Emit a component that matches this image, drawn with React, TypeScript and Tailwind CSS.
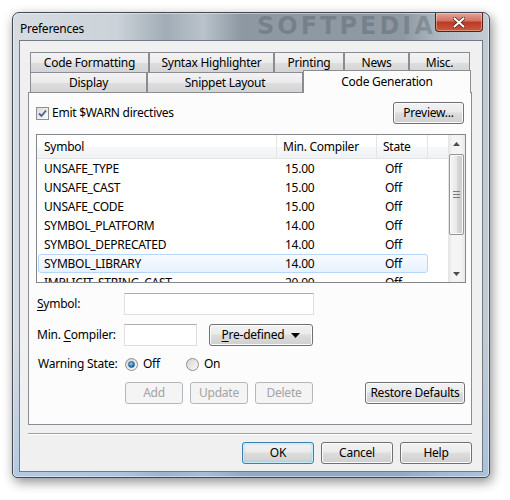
import clsx from 'clsx';
import type { ReactNode } from 'react';

const rows = [
  ['UNSAFE_TYPE', '15.00', 'Off'],
  ['UNSAFE_CAST', '15.00', 'Off'],
  ['UNSAFE_CODE', '15.00', 'Off'],
  ['SYMBOL_PLATFORM', '14.00', 'Off'],
  ['SYMBOL_DEPRECATED', '14.00', 'Off'],
  ['SYMBOL_LIBRARY', '14.00', 'Off'],
  ['IMPLICIT_STRING_CAST', '20.00', 'Off'],
];

function Button({
  children,
  className,
  disabled,
  primary,
}: {
  children: ReactNode;
  className?: string;
  disabled?: boolean;
  primary?: boolean;
}) {
  return (
    <div
      className={clsx(
        'flex h-[22px] items-center justify-center rounded-[3px] border text-[12px]',
        disabled
          ? 'border-[#b5b8bb] bg-[#f4f4f4] text-[#a3a3a3]'
          : primary
            ? 'border-[#3c7fb1] bg-[linear-gradient(#f2f2f2,#ebebeb_45%,#dddddd_50%,#cfcfcf)] text-black shadow-[inset_0_0_0_1px_#c4ecfb,inset_0_0_3px_#5ccbf5]'
            : 'border-[#707070] bg-[linear-gradient(#f2f2f2,#ebebeb_45%,#dddddd_50%,#cfcfcf)] text-black shadow-[inset_0_0_0_1px_#fbfbfb]',
        className,
      )}
    >
      {children}
    </div>
  );
}

function Tab({ label, className, selected }: { label: string; className: string; selected?: boolean }) {
  if (selected) {
    return (
      <div
        className={clsx(
          'relative z-10 -mb-px flex h-[23px] justify-center border border-b-0 border-[#898c95] bg-[#fcfcfc] pt-[2px] text-[12px]',
          className,
        )}
      >
        {label}
      </div>
    );
  }
  return (
    <div
      className={clsx(
        'flex h-[20px] items-center justify-center border border-b-0 border-[#898c95] bg-[linear-gradient(#f3f3f3,#ebebeb_50%,#dedede_50%,#d4d4d4)] text-[12px]',
        className,
      )}
    >
      {label}
    </div>
  );
}

function Radio({ checked, label, className }: { checked?: boolean; label: string; className?: string }) {
  return (
    <div className={clsx('flex items-center gap-[5px]', className)}>
      <span className="flex h-[13px] w-[13px] items-center justify-center rounded-full border border-[#8e8f8f] bg-[linear-gradient(135deg,#d4d4d4,#f9f9f9)]">
        {checked && (
          <span className="h-[7px] w-[7px] rounded-full border border-[#2c628b] bg-[radial-gradient(circle_at_40%_35%,#9fdcff,#2a78c5_55%,#0d3f7a)]" />
        )}
      </span>
      <span>{label}</span>
    </div>
  );
}

function Scrollbar() {
  return (
    <div className="flex w-[17px] flex-col bg-[linear-gradient(90deg,#e4e4e4,#f4f4f4_25%,#f4f4f4_75%,#e8e8e8)]">
      <div className="flex h-[17px] items-center justify-center">
        <svg width="7" height="4" viewBox="0 0 7 4">
          <path d="M3.5 0 L7 4 L0 4 Z" fill="#4d4d4d" />
        </svg>
      </div>
      <div className="flex-1 px-[1px] pt-[2px]">
        <div className="flex h-[81px] flex-col items-center justify-center gap-[2px] rounded-[2px] border border-[#959595] bg-[linear-gradient(90deg,#f6f6f6,#e9e9e9_50%,#d9d9d9_50%,#cdcdcd)] shadow-[inset_0_0_0_1px_#fafafa]">
          <span className="h-px w-[7px] bg-[#7b7b7b]" />
          <span className="h-px w-[7px] bg-[#7b7b7b]" />
          <span className="h-px w-[7px] bg-[#7b7b7b]" />
        </div>
      </div>
      <div className="flex h-[17px] items-center justify-center">
        <svg width="7" height="4" viewBox="0 0 7 4">
          <path d="M0 0 L7 0 L3.5 4 Z" fill="#4d4d4d" />
        </svg>
      </div>
    </div>
  );
}

function SymbolList() {
  return (
    <div className="flex h-[149px] w-[430px] border border-[#828790] bg-white">
      <div className="flex w-[411px] flex-col">
        <div className="flex h-[24px] border-b border-[#e2e3e5] bg-[linear-gradient(#ffffff,#ffffff_50%,#f7f8f9_50%,#f1f2f4)]">
          <div className="flex w-[240px] items-center border-r border-[#e5e5e5] pl-[7px]">Symbol</div>
          <div className="flex w-[100px] items-center border-r border-[#e5e5e5] pl-[6px]">Min. Compiler</div>
          <div className="flex w-[51px] items-center border-r border-[#e5e5e5] pl-[6px]">State</div>
          <div className="flex-1" />
        </div>
        <div className="flex-1 overflow-hidden">
          {rows.map(([symbol, compiler, state], i) => (
            <div
              key={symbol}
              className={clsx(
                'ml-[1px] flex h-[19px] w-[390px] items-center rounded-[3px] border',
                i === 5 ? 'border-[#b8d6fb] bg-[linear-gradient(#f7fbff,#e7f2fd)]' : 'border-transparent',
              )}
            >
              <span className="w-[240px] pl-[5px]">{symbol}</span>
              <span className="w-[100px] pl-[6px]">{compiler}</span>
              <span className="pl-[6px]">{state}</span>
            </div>
          ))}
        </div>
      </div>
      <Scrollbar />
    </div>
  );
}

function TextBox({ className }: { className: string }) {
  return (
    <div
      className={clsx(
        'h-[22px] border border-[#dbdfe6] border-t-[#abadb3] border-l-[#e2e3ea] bg-white',
        className,
      )}
    />
  );
}

export default function App() {
  return (
    <div className="min-h-[500px] bg-white pl-[12px] pt-[12px] font-['Segoe_UI','Noto_Sans',sans-serif] text-[12px] tracking-[-0.25px] text-black">
      <div className="flex h-[466px] w-[478px] flex-col rounded-t-[7px] rounded-b-[5px] border border-[#3f4a54] bg-[linear-gradient(180deg,rgba(255,255,255,0)_70%,rgba(150,185,225,0.55)_100%),linear-gradient(90deg,#d6dce1_0%,#cbd2d8_22%,#a1acb6_32%,#bac3cb_40%,#8d98a2_48%,#8e99a3_82%,#b0bac3_90%,#c4ccd3_100%)] shadow-[2px_4px_12px_rgba(0,0,0,0.45),inset_0_0_0_1px_rgba(255,255,255,0.45)]">
        {/* title bar */}
        <div className="relative flex h-[27px] items-start">
          <span className="absolute left-[244px] top-0 font-['DejaVu_Sans',sans-serif] text-[24px] font-bold leading-[27px] tracking-[3px] text-[rgba(60,70,80,0.28)]">
            SOFTPEDIA
          </span>
          <span className="relative pl-[7px] pt-[7px]">Preferences</span>
          <div className="relative ml-auto mr-[6px] flex h-[19px] w-[48px] items-center justify-center rounded-b-[4px] border border-t-0 border-[#5b1e16] bg-[linear-gradient(#e6a596,#d0705f_45%,#b83a26_50%,#c95a3c)] shadow-[inset_0_0_0_1px_rgba(255,255,255,0.35)]">
            <svg width="12" height="11" viewBox="0 0 12 11">
              <path
                d="M1.5 1.5 L10.5 9.5 M10.5 1.5 L1.5 9.5"
                stroke="#4a1a12"
                strokeWidth="3.6"
                strokeLinecap="round"
              />
              <path
                d="M1.5 1.5 L10.5 9.5 M10.5 1.5 L1.5 9.5"
                stroke="#ffffff"
                strokeWidth="2.2"
                strokeLinecap="round"
              />
            </svg>
          </div>
        </div>

        {/* client area */}
        <div className="mx-[6px] flex h-[432px] flex-col border border-[#6f7b86] bg-[#f0f0f0] pl-[8px] pt-[11px]">
          {/* tabs */}
          <div className="flex h-[20px] pl-[2px]">
            <Tab label="Code Formatting" className="w-[119px]" />
            <Tab label="Syntax Highlighter" className="w-[125px]" />
            <Tab label="Printing" className="w-[70px]" />
            <Tab label="News" className="w-[65px]" />
            <Tab label="Misc." className="w-[61px]" />
          </div>
          <div className="flex h-[20px] items-end pl-[2px]">
            <Tab label="Display" className="w-[117px]" />
            <Tab label="Snippet Layout" className="w-[156px]" />
            <Tab label="Code Generation" className="w-[168px]" selected />
          </div>

          {/* tab panel */}
          <div className="flex h-[333px] w-[444px] flex-col border border-[#898c95] bg-[#fcfcfc] pl-[7px] pr-[5px] pt-[9px]">
            <div className="flex h-[22px] items-center">
              <span className="flex h-[13px] w-[13px] items-center justify-center border border-[#8e8f8f] bg-[linear-gradient(135deg,#dcdcdc,#fbfbfb)]">
                <svg width="9" height="9" viewBox="0 0 9 9">
                  <path d="M1 4.5 L3.5 7 L8 1.5" fill="none" stroke="#4a5f8a" strokeWidth="1.8" />
                </svg>
              </span>
              <span className="ml-[3px]">Emit $WARN directives</span>
              <Button className="ml-auto mr-[2px] w-[71px]">Preview...</Button>
            </div>

            <div className="mt-[10px]">
              <SymbolList />
            </div>

            <div className="mt-[10px] flex h-[22px] items-center">
              <span className="w-[88px] pl-[1px]">
                <span className="underline underline-offset-2">S</span>ymbol:
              </span>
              <TextBox className="w-[190px]" />
            </div>

            <div className="mt-[9px] flex h-[22px] items-center">
              <span className="w-[88px] pl-[1px]">
                Min. <span className="underline underline-offset-2">C</span>ompiler:
              </span>
              <TextBox className="w-[73px]" />
              <Button className="ml-[12px] w-[104px] gap-[7px]">
                <span>
                  <span className="underline underline-offset-2">P</span>re-defined
                </span>
                <svg width="9" height="5" viewBox="0 0 9 5">
                  <path d="M0 0 L9 0 L4.5 5 Z" fill="#000" />
                </svg>
              </Button>
            </div>

            <div className="mt-[10px] flex h-[16px] items-center">
              <span className="w-[89px] pl-[2px]">Warning State:</span>
              <Radio checked label="Off" className="w-[61px]" />
              <Radio label="On" />
            </div>

            <div className="mt-[10px] flex items-center pl-[89px]">
              <Button disabled className="w-[58px]">Add</Button>
              <Button disabled className="ml-[7px] w-[58px]">Update</Button>
              <Button disabled className="ml-[7px] w-[58px]">Delete</Button>
              <Button className="ml-auto mr-[1px] w-[100px]">Restore Defaults</Button>
            </div>
          </div>

          <div className="mt-[8px] h-[2px] w-[444px] border-t border-[#a0a0a0] bg-white" />

          <div className="mt-[7px] flex w-[444px] justify-end gap-[7px]">
            <Button primary className="w-[72px]">OK</Button>
            <Button className="w-[72px]">Cancel</Button>
            <Button className="w-[72px]">Help</Button>
          </div>
        </div>
      </div>
    </div>
  );
}
